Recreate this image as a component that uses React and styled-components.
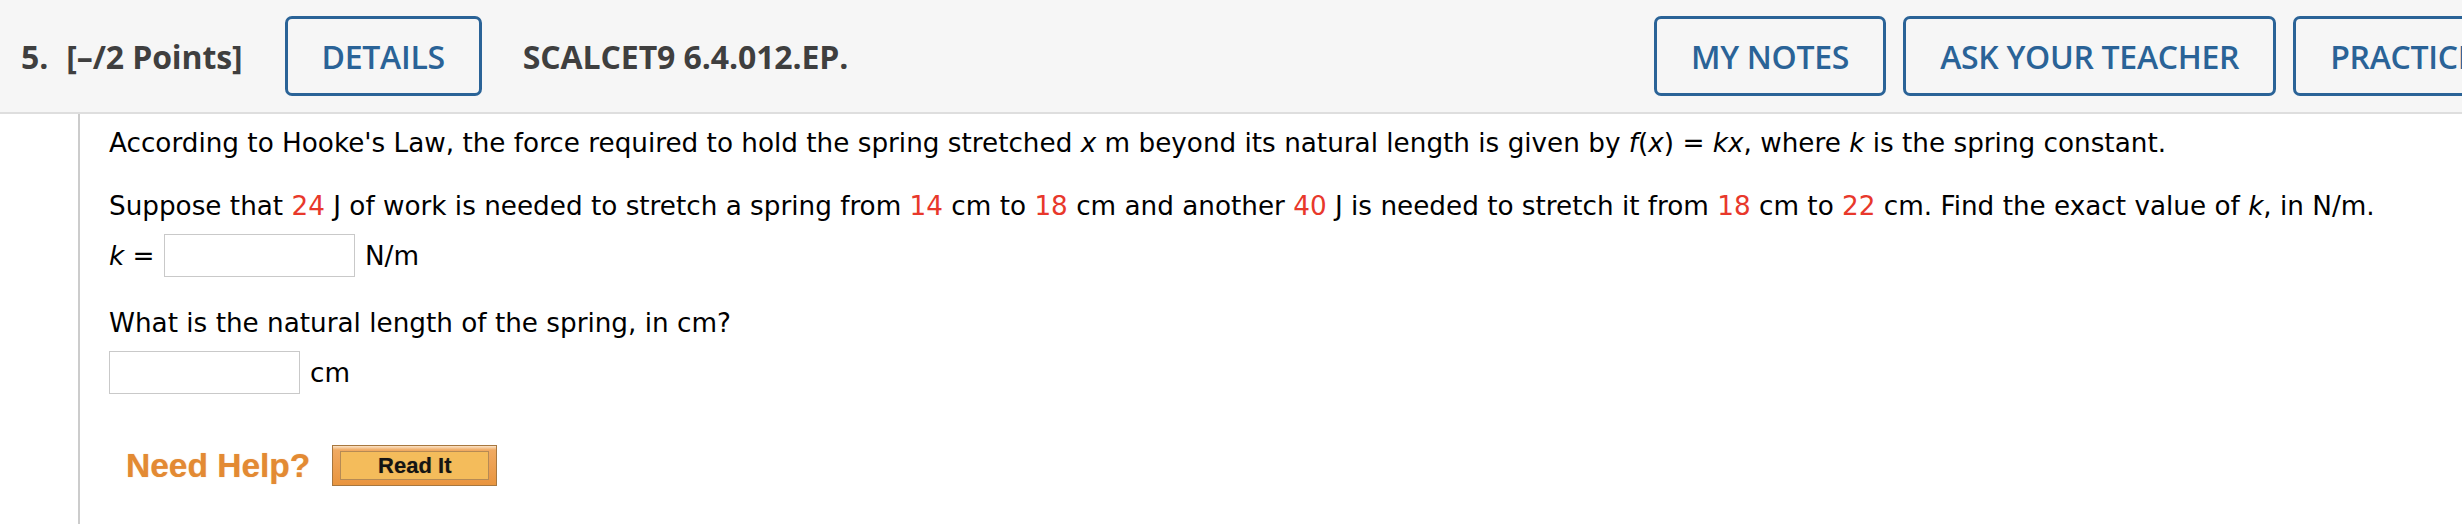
import React from "react";
import styled, { createGlobalStyle } from "styled-components";

const GlobalStyle = createGlobalStyle`
  html, body { margin: 0; padding: 0; background: #ffffff; overflow: hidden; }
  #root { width: 100%; }
`;

const Page = styled.div`
  width: 2462px;
  min-height: 524px;
  background: #ffffff;
`;

const Header = styled.header`
  display: flex;
  align-items: center;
  height: 112px;
  padding-left: 21px;
  background: #f6f6f6;
  border-bottom: 2px solid #dedede;
  white-space: nowrap;
  font-family: "Open Sans", "Liberation Sans", sans-serif;
`;

const TitleGroup = styled.div`
  flex: 0 0 1633px;
  display: flex;
  align-items: center;
`;

const TitleText = styled.span`
  font-size: 32px;
  font-weight: 700;
  color: #3f3f3f;
  letter-spacing: -0.1px;
  margin-left: ${(p) => p.$gap || 0}px;
`;

const ActionGroup = styled.div`
  display: flex;
  align-items: center;
  gap: 17px;
  flex-shrink: 0;
`;

const OutlineButton = styled.button`
  flex-shrink: 0;
  height: 80px;
  padding: 0 34px;
  margin-left: ${(p) => p.$gap || 0}px;
  background: transparent;
  border: 3px solid #2a6397;
  border-radius: 7px;
  color: #2a6397;
  font-family: "Open Sans", "Liberation Sans", sans-serif;
  font-size: 32px;
  font-weight: 600;
  letter-spacing: -0.3px;
  cursor: pointer;
`;

const Content = styled.main`
  margin-left: 78px;
  min-height: 410px;
  border-left: 2px solid #cccccc;
  padding: 11px 0 0 29px;
  display: flex;
  flex-direction: column;
  align-items: flex-start;
  font-family: "DejaVu Sans", Verdana, sans-serif;
  font-size: 26.25px;
  line-height: 36px;
  color: #000000;
`;

const Para = styled.p`
  margin: ${(p) => p.$top || 0}px 0 0 0;
  white-space: nowrap;
`;

const Var = styled.i`
  font-style: italic;
`;

const Num = styled.span`
  color: #e8382b;
`;

const AnswerRow = styled.div`
  display: flex;
  align-items: center;
  margin-top: ${(p) => p.$top || 0}px;
  white-space: pre;
`;

const AnswerBox = styled.input`
  box-sizing: border-box;
  width: 191px;
  height: 43px;
  margin: 0 ${(p) => p.$right || 10}px 0 ${(p) => p.$left || 0}px;
  border: 1px solid #c9c9c9;
  background: #ffffff;
  padding: 0 8px;
  font: inherit;
  outline: none;
`;

const HelpRow = styled.div`
  display: flex;
  align-items: center;
  gap: 22px;
  margin-top: 51px;
  padding-left: 17px;
`;

const NeedHelp = styled.span`
  font-family: "Liberation Sans", Arial, sans-serif;
  font-weight: 700;
  font-size: 33.5px;
  line-height: 41px;
  color: #e38a33;
  text-shadow: 0 0 1px rgba(227, 138, 51, 0.6);
`;

const ReadButton = styled.button`
  box-sizing: border-box;
  width: 165px;
  height: 41px;
  padding: 5px 7px;
  border: 1px solid #a7773f;
  background: linear-gradient(#fbe4c8 0px, #f0aa62 4px, #e9953f 100%);
  cursor: pointer;
  display: flex;
`;

const ReadInner = styled.span`
  flex: 1;
  display: flex;
  align-items: center;
  justify-content: center;
  border: 1px solid #b68a54;
  background: #f4bc5b;
  font-family: "Liberation Sans", Arial, sans-serif;
  font-weight: 700;
  font-size: 22px;
  color: #141414;
  text-shadow: 0 0 1px rgba(0, 0, 0, 0.35);
`;

export default function App() {
  return (
    <Page>
      <GlobalStyle />
      <Header>
        <TitleGroup>
          <TitleText>5.</TitleText>
          <TitleText $gap={18}>[–/2 Points]</TitleText>
          <OutlineButton $gap={42}>DETAILS</OutlineButton>
          <TitleText $gap={41}>SCALCET9 6.4.012.EP.</TitleText>
        </TitleGroup>
        <ActionGroup>
          <OutlineButton>MY NOTES</OutlineButton>
          <OutlineButton>ASK YOUR TEACHER</OutlineButton>
          <OutlineButton>PRACTICE ANOTHER</OutlineButton>
        </ActionGroup>
      </Header>
      <Content>
        <Para>
          According to Hooke's Law, the force required to hold the spring stretched <Var>x</Var> m
          beyond its natural length is given by <Var>f</Var>(<Var>x</Var>) = <Var>kx</Var>, where{" "}
          <Var>k</Var> is the spring constant.
        </Para>
        <Para $top={27}>
          Suppose that <Num>24</Num> J of work is needed to stretch a spring from <Num>14</Num> cm
          to <Num>18</Num> cm and another <Num>40</Num> J is needed to stretch it from{" "}
          <Num>18</Num> cm to <Num>22</Num> cm. Find the exact value of <Var>k</Var>, in N/m.
        </Para>
        <AnswerRow $top={10}>
          <span>
            <Var>k</Var> ={" "}
          </span>
          <AnswerBox $left={1} aria-label="k" />
          <span>N/m</span>
        </AnswerRow>
        <Para $top={28}>What is the natural length of the spring, in cm?</Para>
        <AnswerRow $top={10}>
          <AnswerBox aria-label="natural length" />
          <span>cm</span>
        </AnswerRow>
        <HelpRow>
          <NeedHelp>Need Help?</NeedHelp>
          <ReadButton>
            <ReadInner>Read It</ReadInner>
          </ReadButton>
        </HelpRow>
      </Content>
    </Page>
  );
}
